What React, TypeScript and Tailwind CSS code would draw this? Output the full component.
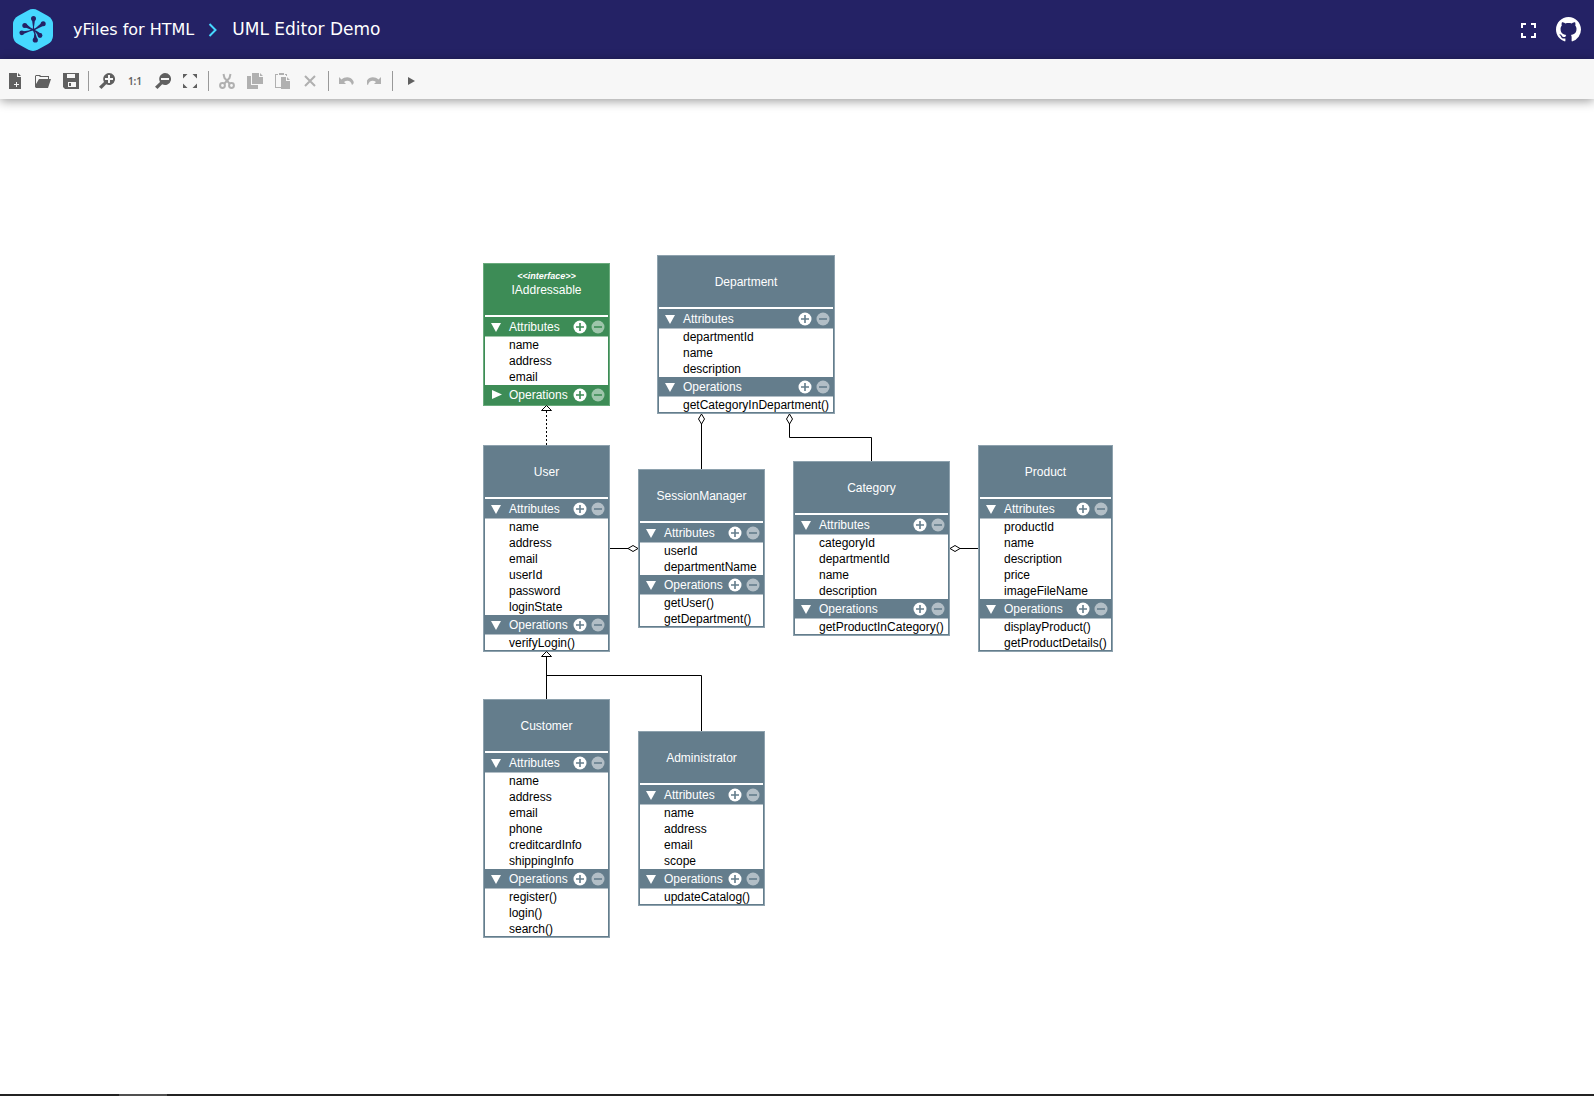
import { useState } from "react";
import type { ReactNode } from "react";

type Box = {
  name: string;
  stereotype?: string;
  place: string;
  attributes: string[];
  operations: string[];
  operationsOpen?: boolean;
};

const boxes: Box[] = [
  { name: "IAddressable", stereotype: "<<interface>>", place: "left-px top-[9px] w-[127px]", attributes: ["name", "address", "email"], operations: [], operationsOpen: false },
  { name: "Department", place: "left-[175px] top-px w-[178px]", attributes: ["departmentId", "name", "description"], operations: ["getCategoryInDepartment()"] },
  { name: "User", place: "left-px top-[191px] w-[127px]", attributes: ["name", "address", "email", "userId", "password", "loginState"], operations: ["verifyLogin()"] },
  { name: "SessionManager", place: "left-[156px] top-[215px] w-[127px]", attributes: ["userId", "departmentName"], operations: ["getUser()", "getDepartment()"] },
  { name: "Category", place: "left-[311px] top-[207px] w-[157px]", attributes: ["categoryId", "departmentId", "name", "description"], operations: ["getProductInCategory()"] },
  { name: "Product", place: "left-[496px] top-[191px] w-[135px]", attributes: ["productId", "name", "description", "price", "imageFileName"], operations: ["displayProduct()", "getProductDetails()"] },
  { name: "Customer", place: "left-px top-[445px] w-[127px]", attributes: ["name", "address", "email", "phone", "creditcardInfo", "shippingInfo"], operations: ["register()", "login()", "search()"] },
  { name: "Administrator", place: "left-[156px] top-[477px] w-[127px]", attributes: ["name", "address", "email", "scope"], operations: ["updateCatalog()"] },
];

function Section({ title, items, green, startOpen, last }: { title: string; items: string[]; green: boolean; startOpen: boolean; last?: boolean }) {
  const [open, setOpen] = useState(startOpen);
  const ink = green ? "#3d8c56" : "#647d8c";
  return (
    <section>
      <div className="flex h-[19px] items-center pr-[3px]">
        <button type="button" aria-label={"Toggle " + title} onClick={() => setOpen(!open)} className="flex w-6 justify-center">
          <svg width="12" height="12" viewBox="0 0 12 12" fill="#fff">
            <path d={open ? "M0 2h10L5 11z" : "M1 1v9l10-4.500z"} />
          </svg>
        </button>
        <h3 className="flex-1 text-xs leading-4">{title}</h3>
        <span className="flex gap-1">
          <button type="button" aria-label={"Add to " + title}>
            <svg width="14" height="14" viewBox="0 0 14 14">
              <circle cx="7" cy="7" r="6.500" fill="#fff" />
              <path d="M7 3v8M3 7h8" stroke={ink} strokeWidth="1.600" />
            </svg>
          </button>
          <button type="button" aria-label={"Remove from " + title}>
            <svg width="14" height="14" viewBox="0 0 14 14">
              <circle cx="7" cy="7" r="6.500" fill="#fff" fillOpacity=".5" />
              <path d="M3 7h8" stroke={ink} strokeWidth="1.600" />
            </svg>
          </button>
        </span>
      </div>
      {open && (
        <ul
          className={
            "border-t bg-white pl-6 text-xs leading-4 text-black " + (green ? "border-[#a0c8ab] " : "border-[#b2bec6] ") + (last ? "*:last:h-[15px]" : "")
          }
        >
          {items.map((item) => (
            <li key={item}>{item}</li>
          ))}
        </ul>
      )}
    </section>
  );
}

function ClassNode({ box }: { box: Box }) {
  const green = box.stereotype !== undefined;
  return (
    <article className={"absolute border px-px pb-px text-white " + box.place + " " + (green ? "border-[#6aab7d] bg-[#3d8c56]" : "border-[#8ea2ae] bg-[#647d8c]")}>
      <header className="flex h-[51px] flex-col items-center justify-center">
        {green && <p className="-mt-3 text-[9px] leading-3 font-bold italic">{box.stereotype}</p>}
        <h2 className="text-xs leading-4">{box.name}</h2>
      </header>
      <div className="h-0.5 bg-white" />
      <Section title="Attributes" items={box.attributes} green={green} startOpen />
      <Section title="Operations" items={box.operations} green={green} startOpen={box.operationsOpen !== false} last />
    </article>
  );
}

function Connectors() {
  return (
    <svg className="pointer-events-none absolute inset-0" width="632" height="685" viewBox="0 0 632 685" fill="none" stroke="#000" aria-hidden="true">
      <path d="M64.500 157V191" strokeDasharray="2 2" />
      <path d="M64.500 151.500l5 5h-10z" fill="#fff" />
      <path d="M219.500 170V215M307.500 170V183.500H389.500V207M128 294.500H146M483 294.500H496" />
      <path d="M219.500 160l3 5-3 5-3-5zM307.500 160l3 5-3 5-3-5zM146 294.500l5-3 5 3-5 3zM468 294.500l5-3 5 3-5 3zM478 294.500H484" fill="#fff" />
      <path d="M64.500 403V445M64.500 421.500H219.500V477" />
      <path d="M64.500 397.500l5 5h-10z" fill="#fff" />
    </svg>
  );
}

function Tool({ label, disabled, children }: { label: string; disabled?: boolean; children: ReactNode }) {
  return (
    <button type="button" aria-label={label} disabled={disabled} className={"flex size-7 items-center justify-center " + (disabled ? "text-[#b0b0b0]" : "text-[#606060]")}>
      {children}
    </button>
  );
}

function Icon({ children }: { children: ReactNode }) {
  return (
    <svg width="16" height="16" viewBox="0 0 16 16" fill="currentColor" aria-hidden="true">
      {children}
    </svg>
  );
}

const Divider = () => <span className="mr-1 ml-[3px] h-5 w-px bg-[#999]" />;

function Logo() {
  return (
    <svg width="40" height="42" viewBox="0 0 40 42" aria-hidden="true">
      <path d="M15 1.400q5-2.800 10 0l10 5.600q4.800 2.800 5 8v12q-.2 5.200-5 8l-10 5.600q-5 2.800-10 0l-10-5.600q-4.800-2.800-5-8V15q.2-5.200 5-8z" fill="#46d8ff" />
      <g fill="#242265">
        <path d="M18.800 9.200L20 18l-.5 3h1.600l-.1-3 1.200-8.800z" />
        <path d="M29.200 13.200L23 18.800l-3 1.400.8 1.500 3-1.800 7.300-3.500z" />
        <path d="M10.800 17.800l6 2.400 3.200 1.400.4-1.300-2.900-1.700-4.200-3.600z" />
        <path d="M9.200 25.400l7.300-3 4-1.200-.7-1.300-4 1.700-7.200.8z" />
        <path d="M28.300 25L23.500 21.800l-3-1.400-.6 1.300 2.900 1.700 2.900 4z" />
        <path d="M20.600 30.200l.7-5.200-1.400-4 1.200-.5 1.500 4 1.500 5.200z" />
        <circle cx="20.500" cy="9.500" r="2.500" />
        <circle cx="30.200" cy="14.800" r="2.500" />
        <circle cx="11.800" cy="16.500" r="2.500" />
        <circle cx="8.800" cy="23.800" r="2.400" />
        <circle cx="27" cy="26.500" r="2.400" />
        <circle cx="22.300" cy="31" r="2.600" />
      </g>
    </svg>
  );
}

export default function App() {
  return (
    <div className="flex min-h-screen flex-col bg-white font-['Liberation_Sans',Arial,sans-serif]">
      <header className="flex h-[59px] items-center justify-between bg-[#242265] px-[13px] font-['DejaVu_Sans',Tahoma,sans-serif] text-white">
        <nav className="flex items-center" aria-label="Breadcrumb">
          <a href="#home" aria-label="yFiles home">
            <Logo />
          </a>
          <a href="#yfiles" className="ml-5 text-base">
            yFiles for HTML
          </a>
          <svg className="mx-3.5" width="10" height="14" viewBox="0 0 10 14" fill="none" stroke="#46d8ff" strokeWidth="2" aria-hidden="true">
            <path d="M1.500 1l6 6-6 6" />
          </svg>
          <a href="#uml" className="text-[17px]">
            UML Editor Demo
          </a>
        </nav>
        <div className="flex items-center gap-5">
          <button type="button" aria-label="Fullscreen">
            <svg width="16" height="16" viewBox="0 0 16 16" fill="none" stroke="#fff" strokeWidth="2">
              <path d="M2 6V2H6M11 2h4V6M15 11v4h-4M6 15H2v-4" />
            </svg>
          </button>
          <a href="#github" aria-label="GitHub">
            <svg width="25" height="25" viewBox="0 0 16 16" fill="#fff">
              <path d="M8 0C3.580 0 0 3.580 0 8c0 3.540 2.290 6.530 5.470 7.590.4.070.55-.17.55-.38 0-.19-.01-.82-.01-1.490-2.010.37-2.530-.49-2.690-.94-.09-.23-.48-.94-.82-1.130-.28-.15-.68-.52-.01-.53.63-.01 1.080.58 1.230.82.72 1.210 1.870.87 2.330.66.07-.52.28-.87.51-1.070-1.780-.2-3.640-.89-3.640-3.950 0-.87.31-1.590.82-2.150-.08-.2-.36-1.020.08-2.120 0 0 .67-.21 2.200.82.64-.18 1.320-.27 2-.27s1.360.09 2 .27c1.530-1.040 2.200-.82 2.200-.82.44 1.100.16 1.920.08 2.120.51.56.82 1.270.82 2.150 0 3.070-1.870 3.750-3.650 3.950.29.25.54.73.54 1.480 0 1.070-.01 1.930-.01 2.200 0 .21.15.46.55.38A8.010 8.010 0 0 0 16 8c0-4.420-3.580-8-8-8z" />
            </svg>
          </a>
        </div>
      </header>

      <div role="toolbar" aria-label="Editor tools" className="flex h-10 items-center bg-[#f7f7f7] pt-1 pl-px shadow-[0_2px_10px_rgba(0,0,0,0.4)]">
        <Tool label="New">
          <Icon>
            <path fillRule="evenodd" d="M2 0h8v4h4v12H2zM9 9v2H7v1h2v2h1v-2h2v-1h-2V9z" />
            <path d="M11 0l3 3h-3z" />
          </Icon>
        </Tool>
        <Tool label="Open">
          <Icon>
            <path d="M0 14V3l1-1h4l1 1h8v3h-1V4H5L4 3H1v8l3-5h12l-3 9H1z" />
          </Icon>
        </Tool>
        <Tool label="Save">
          <Icon>
            <path fillRule="evenodd" d="M0 0h16v16H2l-2-2zM4 1v4h8V1zM5 9v5h8V9z" />
            <path d="M6 10h2v3H6z" />
          </Icon>
        </Tool>
        <Divider />
        <Tool label="Zoom in">
          <Icon>
            <path fillRule="evenodd" d="M10 0a6 6 0 1 1-2.800 11.300L2.500 16 0 13.800 5 9A6 6 0 0 1 10 0zM9 2v3H6v2h3v3h2V7h3V5h-3V2z" />
          </Icon>
        </Tool>
        <Tool label="Zoom to original size">
          <span className="font-['Noto_Sans',sans-serif] text-[10px] leading-4 font-semibold">1:1</span>
        </Tool>
        <Tool label="Zoom out">
          <Icon>
            <path fillRule="evenodd" d="M10 0a6 6 0 1 1-2.800 11.300L2.500 16 0 13.800 5 9A6 6 0 0 1 10 0zM6 5v2h8V5z" />
          </Icon>
        </Tool>
        <Tool label="Fit content">
          <Icon>
            <path d="M0 1h4.500L0 5.500zM9.500 1H14v4.500zM14 10.500V15H9.500zM4.500 15H0v-4.500z" />
          </Icon>
        </Tool>
        <Divider />
        <Tool label="Cut" disabled>
          <Icon>
            <g fill="none" stroke="currentColor" strokeWidth="2">
              <path d="M4.500 1l1 4 5.500 6M11.500 1l-1 4L5 11" />
              <circle cx="3.500" cy="12.500" r="2.400" />
              <circle cx="12.500" cy="12.500" r="2.400" />
            </g>
          </Icon>
        </Tool>
        <Tool label="Copy" disabled>
          <Icon>
            <path d="M5 0h7v4h4v7H5zM13 0l3 3h-3zM0 3h4v9h7v4H0z" />
          </Icon>
        </Tool>
        <Tool label="Paste" disabled>
          <Icon>
            <path d="M0 1h3v1H1v12h5v1H0zM4 0h5v2H4zM10 1h2v2h-1V2h-1zM6 4h5v4h4v8H6zM12 4l3 3h-3z" />
          </Icon>
        </Tool>
        <Tool label="Delete" disabled>
          <Icon>
            <path d="M2 3l10 10M12 3L2 13" stroke="currentColor" strokeWidth="2" />
          </Icon>
        </Tool>
        <Divider />
        <Tool label="Undo" disabled>
          <Icon>
            <path d="M0 4v7h7L5 9c3-2.500 7-1.500 8 3 2-1 2.200-3 1-4.500C11.500 3.500 6 3.500 2.500 6.500z" />
          </Icon>
        </Tool>
        <Tool label="Redo" disabled>
          <Icon>
            <path d="M14 4v7H7l2-2C6 6.500 2 7.500 1 12c-2-1-2.200-3-1-4.500C2.500 3.500 8 3.500 11.500 6.500z" />
          </Icon>
        </Tool>
        <Divider />
        <Tool label="Run layout">
          <Icon>
            <path d="M5 4l7 4-7 4z" />
          </Icon>
        </Tool>
      </div>

      <main className="flex flex-1 items-center justify-center">
        <div className="relative h-[685px] w-[630px]">
          {boxes.map((box) => (
            <ClassNode key={box.name} box={box} />
          ))}
          <Connectors />
        </div>
      </main>

      <footer className="h-0.5 bg-[#232323]">
        <div className="ml-[119px] h-full w-12 bg-[#505050]" />
      </footer>
    </div>
  );
}
